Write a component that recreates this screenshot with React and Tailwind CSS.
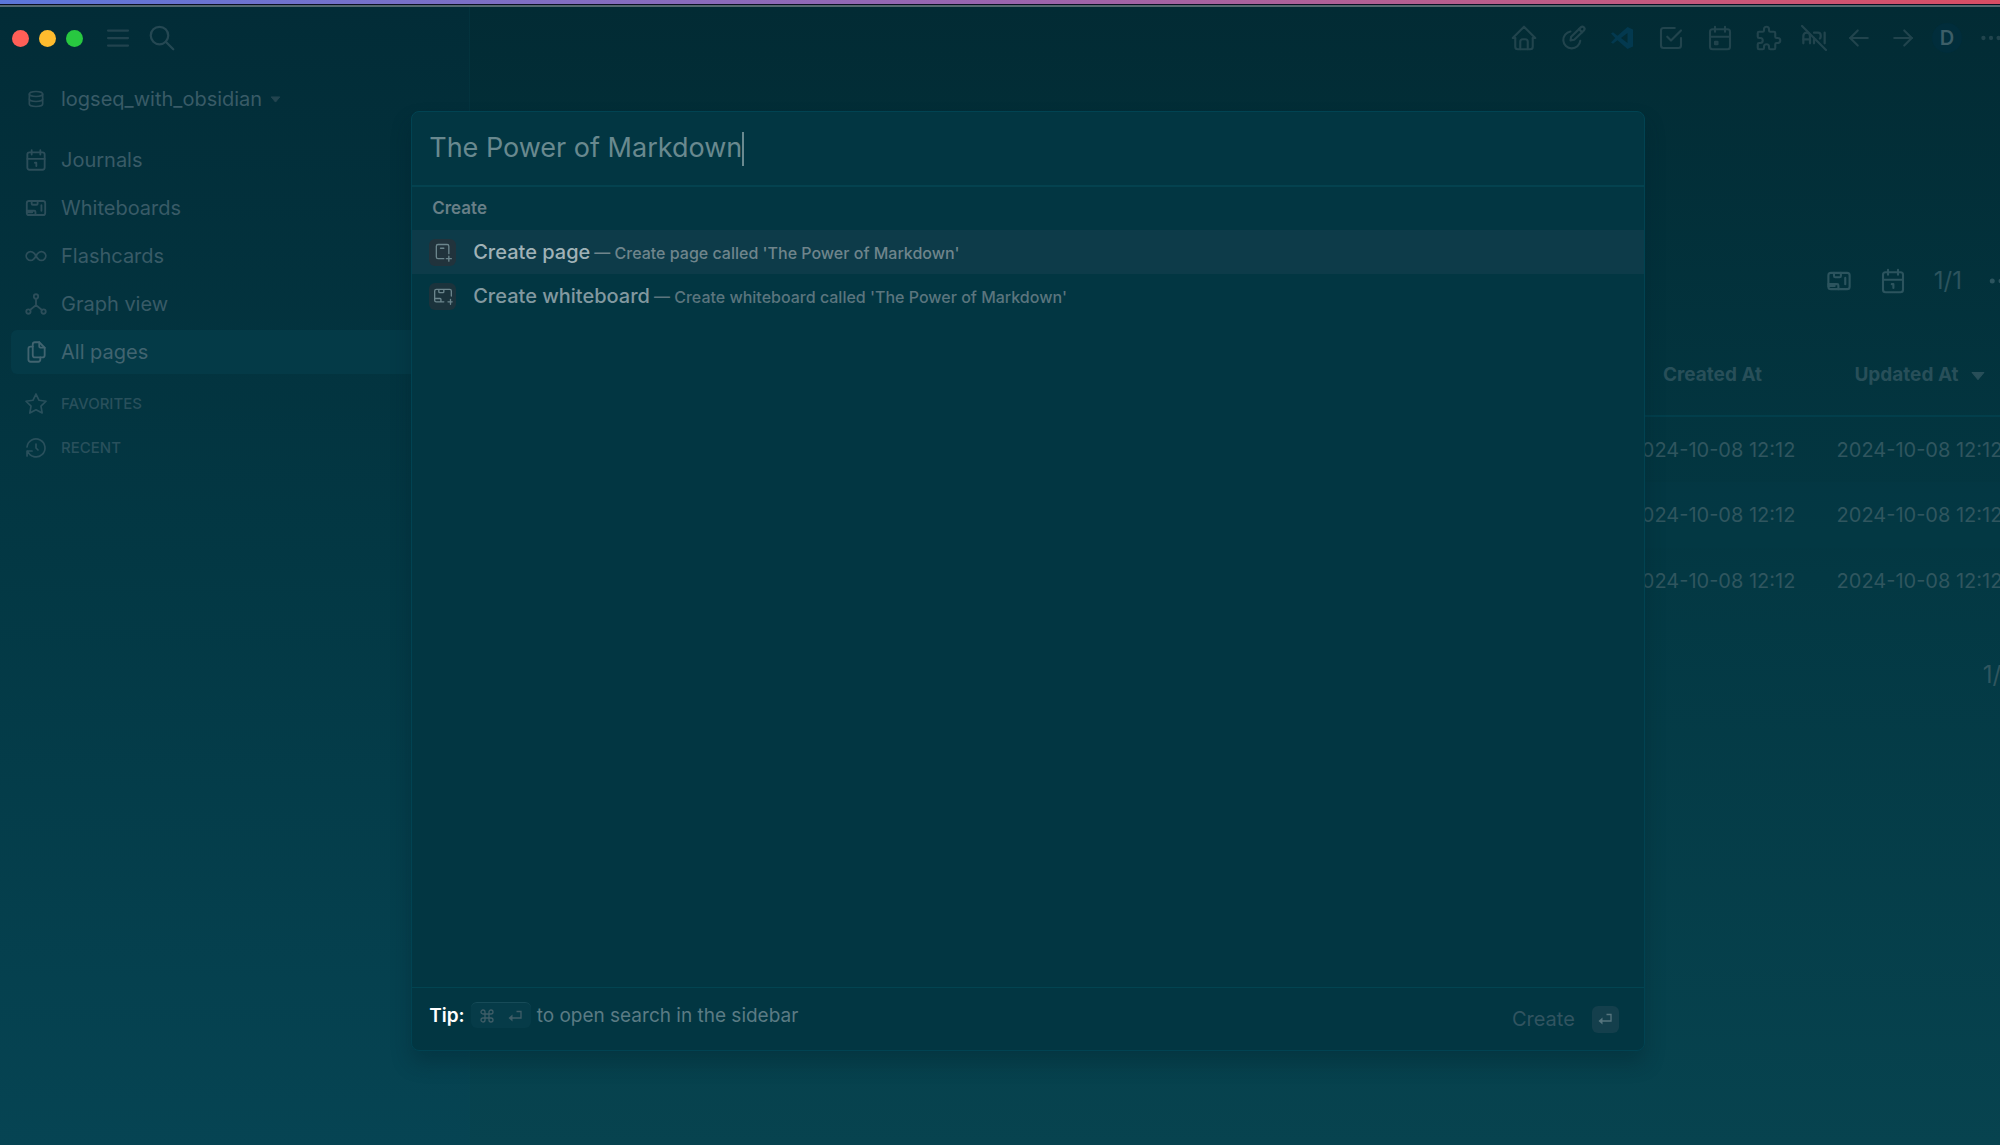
import React, { useState } from "react";
import {
    TbApiOff,
    TbArrowLeft,
    TbArrowRight,
    TbCalendarEvent,
    TbCheckbox,
    TbDatabase,
    TbDots,
    TbFiles,
    TbHistory,
    TbHome,
    TbMenu2,
    TbPuzzle,
    TbSearch,
    TbStar,
} from "react-icons/tb";

const Svg = ({ children, className, strokeWidth = 1.7 }) => (
    <svg
        viewBox="0 0 24 24"
        fill="none"
        stroke="currentColor"
        strokeWidth={strokeWidth}
        strokeLinecap="round"
        strokeLinejoin="round"
        className={className}
        aria-hidden="true"
    >
        {children}
    </svg>
);

const JournalIcon = ({ className }) => (
    <Svg className={className}>
        <rect x="4" y="5" width="16" height="16" rx="2" />
        <path d="M8 3v4M16 3v4M4 11h16" />
        <path d="M11 14.500h1.300v3" />
    </Svg>
);

const WhiteboardIcon = ({ className }) => (
    <Svg className={className}>
        <rect x="3.500" y="5.500" width="17" height="13" rx="2" />
        <path d="M8 5.500v2.500a1 1 0 0 0 1 1h3.500a1 1 0 0 0 1-1v-2.500M17 9.500v5M3.500 14.500h7a1 1 0 0 1 1 1v3M3.500 16h5" />
    </Svg>
);

const FlashcardsIcon = ({ className }) => (
    <Svg className={className}>
        <path d="M9.830 9.170a4 4 0 1 0 0 5.660a10 10 0 0 0 2.170-2.830a10 10 0 0 1 2.170-2.830a4 4 0 1 1 0 5.660a10 10 0 0 1-2.170-2.830a10 10 0 0 0-2.170-2.830" />
    </Svg>
);

const GraphIcon = ({ className }) => (
    <Svg className={className}>
        <circle cx="12" cy="5" r="2" />
        <circle cx="5" cy="19" r="2" />
        <circle cx="19" cy="19" r="2" />
        <path d="M12 7v6M12 13l-5.500 4.600M12 13l5.500 4.600" />
    </Svg>
);

const DrawIcon = ({ className }) => (
    <Svg className={className}>
        <path d="M10 6.800a6.800 6.800 0 1 0 7.800 7.500" />
        <path d="M10 13.900l.5-2.900l7.700-7.500a1.700 1.700 0 0 1 2.500 2.500l-7.700 7.400z" />
        <path d="M16.800 4.900l2.500 2.500" />
    </Svg>
);

const VscodeIcon = ({ className }) => (
    <svg viewBox="0 0 30 30" fill="currentColor" className={className} aria-hidden="true">
        <path
            fillRule="evenodd"
            d="M20.500 4L26 6.500v17L20.500 26L10.500 17.300L6 20.700L4 19.500L8.200 15L4 10.500L6 9.300L10.500 12.700zM20.500 10L14 15l6.500 5z"
        />
    </svg>
);

const NewPageIcon = ({ className }) => (
    <Svg className={className} strokeWidth={1.6}>
        <path d="M13 20H6a2 2 0 0 1-2-2V5a2 2 0 0 1 2-2h11a2 2 0 0 1 2 2v9M9 7.500h4M19 17v6M16 20h6" />
    </Svg>
);

const NewWhiteboardIcon = ({ className }) => (
    <Svg className={className} strokeWidth={1.6}>
        <path d="M13 19H4a2 2 0 0 1-2-2V6a2 2 0 0 1 2-2h16a2 2 0 0 1 2 2v6M7 4v3a1 1 0 0 0 1 1h4a1 1 0 0 0 1-1V4M2 15h6.500a1 1 0 0 1 1 1v3M21 16v6M18 19h5" />
    </Svg>
);

const ReturnIcon = ({ className }) => (
    <svg viewBox="0 0 14 12" fill="none" stroke="currentColor" strokeWidth="1.300" className={className} aria-hidden="true">
        <path d="M8.500 1.500h4.500v6.500H3" />
        <path d="M4.500 4.500v7L0.500 8z" fill="currentColor" stroke="none" />
    </svg>
);

const Caret = ({ className }) => (
    <svg viewBox="0 0 12 8" fill="currentColor" className={className} aria-hidden="true">
        <path d="M1 1h10L6 7z" stroke="currentColor" strokeWidth="1" strokeLinejoin="round" />
    </svg>
);

const navItems = [
    { label: "Journals", icon: JournalIcon },
    { label: "Whiteboards", icon: WhiteboardIcon },
    { label: "Flashcards", icon: FlashcardsIcon },
    { label: "Graph view", icon: GraphIcon },
    { label: "All pages", icon: TbFiles, active: true },
];

const pluginButtons = [
    { label: "Home", icon: TbHome },
    { label: "Draw", icon: DrawIcon },
    { label: "Open in VS Code", icon: VscodeIcon, color: "text-[#03394f]" },
    { label: "Todo", icon: TbCheckbox },
    { label: "Calendar", icon: TbCalendarEvent },
    { label: "Plugins", icon: TbPuzzle },
];

const rows = [
    { created: "2024-10-08 12:12", updated: "2024-10-08 12:12" },
    { created: "2024-10-08 12:12", updated: "2024-10-08 12:12" },
    { created: "2024-10-08 12:12", updated: "2024-10-08 12:12" },
];

const Sidebar = () => (
    <aside className="w-[470px] shrink-0 border-r border-[#0b4a54]/20 bg-linear-to-b from-[#022c37] via-[#033844] to-[#064453]">
        <div className="flex h-[62px] items-center pl-3">
            <div className="flex gap-[10px]">
                <span className="size-[17px] rounded-full bg-[#ff5f57]" />
                <span className="size-[17px] rounded-full bg-[#febc2e]" />
                <span className="size-[17px] rounded-full bg-[#28c840]" />
            </div>
            <button aria-label="Toggle sidebar" className="ml-5 text-[#21434e]">
                <TbMenu2 className="size-[30px] stroke-[1.8]" />
            </button>
            <button aria-label="Search" className="ml-[14px] text-[#254853]">
                <TbSearch className="size-[30px] stroke-[1.8]" />
            </button>
        </div>

        <button className="mt-2 flex h-[44px] items-center pl-[23px] text-[#395b67]">
            <TbDatabase className="mr-3 size-[26px] p-[3px] text-[#294b56]" />
            <span className="text-[20px]">logseq_with_obsidian</span>
            <Caret className="ml-2 h-[7px] w-[11px] text-[#234550]" />
        </button>

        <nav className="mt-[17px] flex flex-col gap-1 px-[11px]">
            {navItems.map(({ label, icon: Icon, active }) => (
                <a
                    key={label}
                    href="#"
                    className={`flex h-[44px] items-center rounded-md pl-3 text-[20px] ${
                        active ? "bg-[#043a47] text-[#416470]" : "text-[#395b67]"
                    }`}
                >
                    <Icon className={`mr-3 size-[26px] stroke-[1.7] ${active ? "text-[#416470]" : "text-[#2c4e5a]"}`} />
                    {label}
                </a>
            ))}
        </nav>

        <div className="mt-2 px-[11px] text-[15px] font-medium text-[#29505c]">
            <button className="flex h-[44px] items-center pl-3">
                <TbStar className="mr-3 size-[26px] p-px stroke-[1.7]" />
                FAVORITES
            </button>
            <button className="flex h-[44px] items-center pl-3">
                <TbHistory className="mr-3 size-[26px] p-px stroke-[1.7]" />
                RECENT
            </button>
        </div>
    </aside>
);

const Toolbar = () => (
    <header className="flex h-[62px] items-center justify-end gap-[14px] pr-[50px] text-[#21444d]">
        <div className="flex gap-[19px]">
            {pluginButtons.map(({ label, icon: Icon, color }) => (
                <button key={label} aria-label={label} className={color}>
                    <Icon className="size-[30px] stroke-[1.7]" />
                </button>
            ))}
        </div>
        <button aria-label="API server">
            <TbApiOff className="size-8 stroke-[1.7]" />
        </button>
        <button aria-label="Back">
            <TbArrowLeft className="size-[30px] stroke-[1.7]" />
        </button>
        <button aria-label="Forward">
            <TbArrowRight className="size-[30px] stroke-[1.7]" />
        </button>
        <button className="size-[30px] rounded-full bg-[#012d3b] text-[20px] font-semibold text-[#3d5e67]">D</button>
        <button aria-label="More">
            <TbDots className="size-[30px] p-[2px]" />
        </button>
    </header>
);

const AllPages = () => (
    <main className="min-w-0 flex-1 bg-linear-to-b from-[#022b34] via-[#033843] to-[#07434f]">
        <Toolbar />
        <div className="mt-[187px] flex items-center justify-end gap-6 pr-[40px] text-[24px] leading-[50px] text-[#2c545e]">
            <button aria-label="Whiteboards">
                <WhiteboardIcon className="size-[30px]" />
            </button>
            <button aria-label="Journals">
                <JournalIcon className="size-[30px]" />
            </button>
            <span className="pl-[2px]">1/1</span>
            <button aria-label="Options">
                <TbDots className="size-[30px]" />
            </button>
        </div>

        <div className="mt-[30px] pr-[33px] pl-[60px]">
            <table className="w-full table-fixed text-center text-[20px] text-[#30565f]">
                <thead className="border-b-2 border-[#023e4b] text-[19px]">
                    <tr className="h-[80px] text-[#284f59]">
                        <td />
                        <th className="w-[207px] font-bold">Created At</th>
                        <th className="w-[207px] font-bold">
                            <span className="flex items-center justify-center gap-3">
                                Updated At
                                <Caret className="h-[10px] w-[14px]" />
                            </span>
                        </th>
                    </tr>
                </thead>
                <tbody>
                    {rows.map((row, i) => (
                        <tr key={i} className="h-[66px] even:bg-[#043a46]/40">
                            <td />
                            <td className="whitespace-nowrap">{row.created}</td>
                            <td className="whitespace-nowrap">{row.updated}</td>
                        </tr>
                    ))}
                </tbody>
            </table>
            <p className="mt-[36px] pr-3 text-right text-[24px] leading-[50px] text-[#30565f]">1/1</p>
        </div>
    </main>
);

const ResultRow = ({ icon: Icon, title, hint, active }) => (
    <button className={`flex h-[44px] w-full items-center px-[17px] text-left ${active ? "bg-[#0d3b49]" : ""}`}>
        <span
            className={`mr-[17px] flex size-[27px] items-center justify-center rounded-md text-[#6b858c] ${
                active ? "bg-[#21333c]" : "bg-[#1b333c]"
            }`}
        >
            <Icon className="size-5" />
        </span>
        <span className="flex items-baseline gap-1 font-medium">
            <span className={`text-[20px] ${active ? "text-[#a0b2b7]" : "text-[#8299a0]"}`}>{title}</span>
            <span className={`text-[16px] ${active ? "text-[#6f858c]" : "text-[#5b757e]"}`}>— {hint}</span>
        </span>
    </button>
);

const CommandPalette = () => {
    const [query, setQuery] = useState("The Power of Markdown");

    return (
        <div
            role="dialog"
            aria-label="Search"
            className="absolute inset-x-0 top-[104px] mx-auto flex min-h-[940px] w-3/5 flex-col overflow-hidden rounded-lg border border-[#014352] bg-[#023642] shadow-[0_12px_20px_rgba(0,30,40,0.3)]"
        >
            <div className="flex h-[75px] items-center border-b-2 border-[#04424f] px-[17px]">
                <input
                    aria-label="Search query"
                    value={query}
                    onChange={(e) => setQuery(e.target.value)}
                    className="field-sizing-content bg-transparent text-[27px] text-[#69898f] outline-none"
                />
                <span className="h-[34px] w-[2px] bg-[#69898f]" />
            </div>

            <div className="flex-1">
                <h2 className="px-5 text-[17px] leading-[43px] font-semibold text-[#687f87]">Create</h2>
                <ResultRow icon={NewPageIcon} title="Create page" hint={`Create page called '${query}'`} active />
                <ResultRow icon={NewWhiteboardIcon} title="Create whiteboard" hint={`Create whiteboard called '${query}'`} />
            </div>

            <footer className="flex h-[63px] items-start border-t border-[#024451] pt-[14px] pr-[25px] pl-[17px] text-[19px] leading-[28px] text-[#5b7b84]">
                <span className="font-semibold text-white">Tip:</span>
                <kbd className="mx-[6px] flex h-[26px] w-[60px] items-center justify-center gap-[14px] rounded-md border-t border-[#174b58] bg-[#063b48] font-sans text-[#3f5d67]">
                    <svg viewBox="0 0 14 14" fill="none" stroke="currentColor" strokeWidth="1.300" className="size-[14px]" aria-hidden="true">
                        <path d="M5 5h4v4H5zM5 5H3a2 2 0 1 1 2-2zM9 5V3a2 2 0 1 1 2 2zM9 9h2a2 2 0 1 1-2 2zM5 9v2a2 2 0 1 1-2-2z" />
                    </svg>
                    <ReturnIcon className="h-3 w-[14px]" />
                </kbd>
                <span>to open search in the sidebar</span>
                <button className="ml-auto flex items-center gap-[17px] pt-[3px] text-[20px] text-[#315460]">
                    Create
                    <span className="flex size-[27px] items-center justify-center rounded-md bg-[#143f4c] text-[#56757e]">
                        <ReturnIcon className="h-3 w-[14px]" />
                    </span>
                </button>
            </footer>
        </div>
    );
};

const App = () => (
    <div className="flex min-h-screen flex-col overflow-hidden bg-[#022b34] font-['Inter',sans-serif]">
        <div className="h-1 bg-linear-to-r from-[#5b76da] via-[#9a64ae] to-[#d94c63]" />
        <div className="h-[3px] border-t border-[#0a0f24] bg-[#53686f]" />
        {/* the window runs a little past the right edge of the screen */}
        <div className="relative flex w-[calc(100%+56px)] flex-1">
            <Sidebar />
            <AllPages />
            <CommandPalette />
        </div>
    </div>
);

export default App;
